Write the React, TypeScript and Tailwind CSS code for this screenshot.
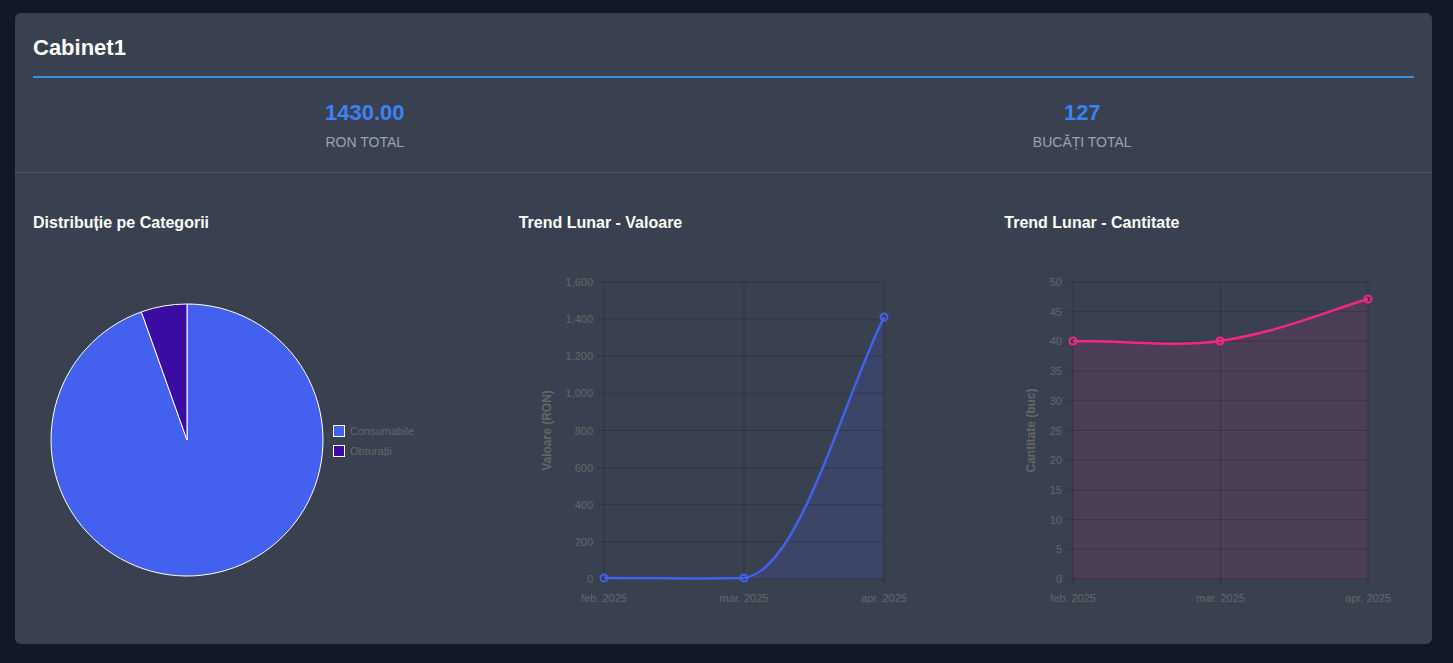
import React from "react";

const tick = "#666666";
const grid = "rgba(0,0,0,0.18)";

function Pie() {
  const cx = 154, cy = 185, r = 136;
  const a = (19.6 * Math.PI) / 180;
  const px = cx - r * Math.sin(a), py = cy - r * Math.cos(a);
  return (
    <svg width="410" height="370" className="overflow-visible">
      <path d={`M${cx},${cy} L${cx},${cy - r} A${r},${r} 0 1 1 ${px},${py} Z`} fill="#4361ee" stroke="#fff" strokeWidth="1" />
      <path d={`M${cx},${cy} L${px},${py} A${r},${r} 0 0 1 ${cx},${cy - r} Z`} fill="#3a0ca3" stroke="#fff" strokeWidth="1" />
      <rect x="300.5" y="170.5" width="11" height="11" fill="#4361ee" stroke="#fff" />
      <rect x="300.5" y="190.5" width="11" height="11" fill="#3a0ca3" stroke="#fff" />
      <text x="317" y="180" fontSize="11" fill={tick} fontFamily="Liberation Sans, Arial, sans-serif">Consumabile</text>
      <text x="317" y="200" fontSize="11" fill={tick} fontFamily="Liberation Sans, Arial, sans-serif">Obturații</text>
    </svg>
  );
}

type LineProps = {
  left: number; right: number; labels: string[]; max: number; step: number;
  title: string; titleX: number; path: string; pts: [number, number][]; color: string; fill: string;
};

function LineChart({ left, right, labels, max, step, title, titleX, path, pts, color, fill }: LineProps) {
  const top = 27, bottom = 324;
  const n = max / step;
  const ys = Array.from({ length: n + 1 }, (_, i) => i);
  const mid = (left + right) / 2;
  const xs = [left, mid, right];
  const font = "Liberation Sans, Arial, sans-serif";
  return (
    <svg width="410" height="370" className="overflow-visible">
      <path d={`${path} L${right},${bottom} L${left},${bottom} Z`} fill={fill} />
      {ys.map((i) => {
        const y = bottom - (i * (bottom - top)) / n;
        return (
          <g key={i}>
            <line x1={left - 6} x2={right} y1={y} y2={y} stroke={grid} />
            <text x={left - 11} y={y + 4} fontSize="11" textAnchor="end" fill={tick} fontFamily={font}>
              {(i * step).toLocaleString("en-US")}
            </text>
          </g>
        );
      })}
      {xs.map((x, i) => (
        <g key={i}>
          <line x1={x} x2={x} y1={top} y2={bottom + 6} stroke={grid} />
          <text x={x} y={bottom + 23} fontSize="11" textAnchor="middle" fill={tick} fontFamily={font}>{labels[i]}</text>
        </g>
      ))}
      <text transform={`translate(${titleX},${(top + bottom) / 2}) rotate(-90)`} fontSize="12" fontWeight="bold" textAnchor="middle" fill={tick} fontFamily={font}>{title}</text>
      <path d={path} fill="none" stroke={color} strokeWidth="2.5" />
      {pts.map(([x, y], i) => (
        <circle key={i} cx={x} cy={y} r="3.5" fill="none" stroke={color} strokeWidth="2" />
      ))}
    </svg>
  );
}

export default function App() {
  const labels = ["feb. 2025", "mar. 2025", "apr. 2025"];
  return (
    <div className="min-h-[663px] bg-[#111827] pt-[13px] pb-[19px] pl-[15px] pr-[21px]" style={{ fontFamily: "Liberation Sans, Arial, sans-serif" }}>
      <div className="bg-[#394150] rounded-md h-[631px] flex flex-col">
        <div className="px-[18px]">
          <div className="pt-[20px] pb-[13px] border-b-2 border-[#3a8fd6]">
            <h1 className="text-[22px] leading-[30px] font-bold text-white">Cabinet1</h1>
          </div>
        </div>
        <div className="border-b border-[#4a5262] px-[18px] pt-[20px] pb-[20px] grid grid-cols-2 gap-[54px] text-center">
          <div>
            <div className="text-[22px] leading-[30px] font-bold text-[#3b82f6]">1430.00</div>
            <div className="mt-[4px] text-sm leading-[20px] text-[#9ca3af]">RON TOTAL</div>
          </div>
          <div>
            <div className="text-[22px] leading-[30px] font-bold text-[#3b82f6]">127</div>
            <div className="mt-[4px] text-sm leading-[20px] text-[#9ca3af]">BUCĂȚI TOTAL</div>
          </div>
        </div>
        <div className="px-[18px] pt-[40px] grid grid-cols-3 gap-[76px]">
          <div>
            <h2 className="text-base leading-[20px] font-bold text-white">Distribuție pe Categorii</h2>
            <div className="mt-[22px]"><Pie /></div>
          </div>
          <div>
            <h2 className="text-base leading-[20px] font-bold text-white">Trend Lunar - Valoare</h2>
            <div className="mt-[22px]">
              <LineChart left={85} right={365} labels={labels} max={1600} step={200} title="Valoare (RON)" titleX={32}
                path="M85,323 C140,323 185,324 225,323 C280,316 322,150 365,62"
                pts={[[85, 323], [225, 323], [365, 62]]} color="#4361ee" fill="rgba(67,97,238,0.15)" />
            </div>
          </div>
          <div>
            <h2 className="text-base leading-[20px] font-bold text-white">Trend Lunar - Cantitate</h2>
            <div className="mt-[22px]">
              <LineChart left={69} right={364} labels={labels} max={50} step={5} title="Cantitate (buc)" titleX={31}
                path="M69,86 C128,86 170,92 216,86 C275,77 318,58 364,44"
                pts={[[69, 86], [216, 86], [364, 44]]} color="#f72585" fill="rgba(247,37,133,0.1)" />
            </div>
          </div>
        </div>
      </div>
    </div>
  );
}
